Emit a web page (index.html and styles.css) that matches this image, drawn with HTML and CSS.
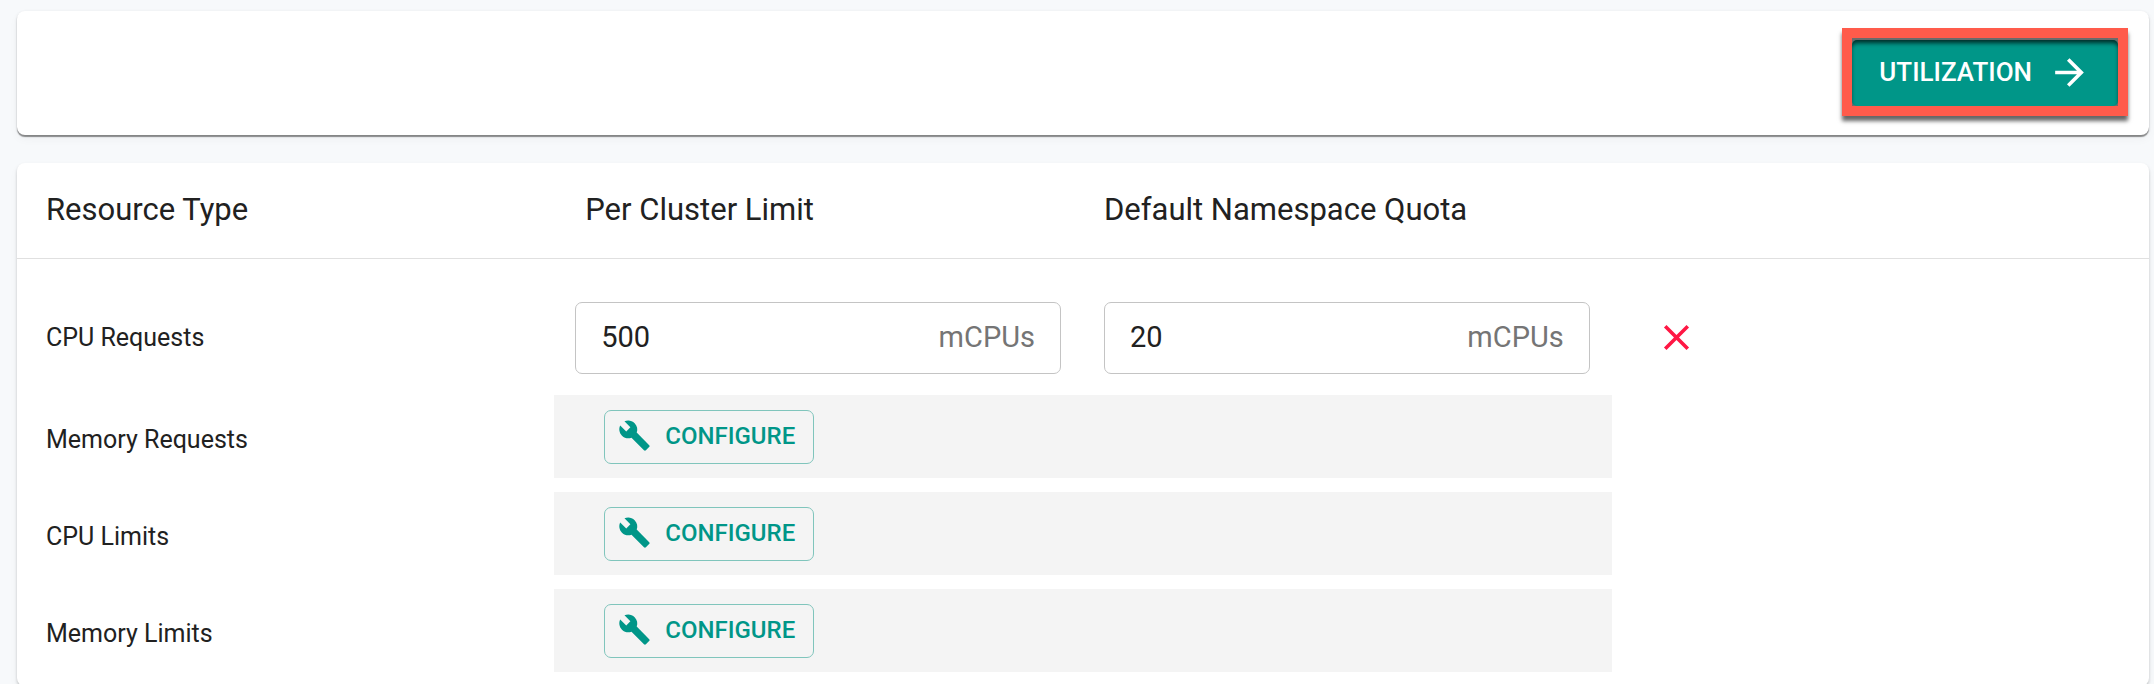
FILE: index.html
```html
<!DOCTYPE html>
<html lang="en">
    <head>
    <meta charset="utf-8">
    <title>Resource Quotas</title>
    <link rel="stylesheet" href="styles.css">
    </head>
    <body>
        <svg class="sprite">
          <symbol id="build" viewBox="0 0 24 24">
            <path d="M22.7 19l-9.1-9.1c.9-2.3.4-5-1.5-6.9-2-2-5-2.4-7.4-1.3L9 6 6 9 1.6 4.7C.4 7.1.9 10.1 2.9 12.1c1.9 1.9 4.6 2.4 6.9 1.5l9.1 9.1c.4.4 1 .4 1.4 0l2.3-2.3c.5-.4.5-1.1.1-1.4z"/>
          </symbol>
        </svg>

        <div class="card toolbar">
          <div class="highlight">
            <button class="utilization-button">
              UTILIZATION
              <svg class="arrow-icon" viewBox="0 0 24 24"><path d="M12 4l-1.41 1.41L16.17 11H4v2h12.17l-5.58 5.59L12 20l8-8z"/></svg>
            </button>
          </div>
        </div>

        <div class="card">
          <table class="quota-table">
            <thead>
              <tr>
                <th class="col-type">Resource Type</th>
                <th class="col-limit">Per Cluster Limit</th>
                <th class="col-quota">Default Namespace Quota</th>
                <th></th>
              </tr>
            </thead>
            <tbody>
              <tr class="edit-row">
                <td class="col-type">CPU Requests</td>
                <td>
                  <div class="field">
                    <input type="text" id="cpu-limit" class="field-input" value="500">
                    <label for="cpu-limit" class="unit">mCPUs</label>
                  </div>
                </td>
                <td>
                  <div class="field">
                    <input type="text" id="cpu-quota" class="field-input" value="20">
                    <label for="cpu-quota" class="unit">mCPUs</label>
                  </div>
                </td>
                <td class="col-remove">
                  <button class="remove-button" aria-label="Remove">
                    <svg class="close-icon" viewBox="0 0 24 24"><path d="M19 6.41L17.59 5 12 10.59 6.41 5 5 6.41 10.59 12 5 17.59 6.41 19 12 13.41 17.59 19 19 17.59 13.41 12z"/></svg>
                  </button>
                </td>
              </tr>
              <tr class="empty-row">
                <td class="col-type">Memory Requests</td>
                <td class="col-configure" colspan="2">
                  <div class="configure-box">
                    <button class="configure-button"><svg class="build-icon"><use href="#build"/></svg>CONFIGURE</button>
                  </div>
                </td>
                <td></td>
              </tr>
              <tr class="empty-row">
                <td class="col-type">CPU Limits</td>
                <td class="col-configure" colspan="2">
                  <div class="configure-box">
                    <button class="configure-button"><svg class="build-icon"><use href="#build"/></svg>CONFIGURE</button>
                  </div>
                </td>
                <td></td>
              </tr>
              <tr class="empty-row">
                <td class="col-type">Memory Limits</td>
                <td class="col-configure" colspan="2">
                  <div class="configure-box">
                    <button class="configure-button"><svg class="build-icon"><use href="#build"/></svg>CONFIGURE</button>
                  </div>
                </td>
                <td></td>
              </tr>
            </tbody>
          </table>
        </div>
    </body>
</html>
```
FILE: styles.css
```css
*{
  box-sizing:border-box;
}
body{
  margin:0;
  padding:11px 5px 0 17px;
  height:100vh;
  overflow:hidden;
  background-color:#f7f9fb;
  color:#212121;
  font-family:Roboto, "Liberation Sans", sans-serif;
  font-size:25px;
}
button{
  font-family:inherit;
  font-weight:500;
  cursor:pointer;
}
svg{
  fill:currentColor;
  flex-shrink:0;
}
.sprite{
  display:none;
}
.card{
  background-color:white;
  border-radius:8px;
  box-shadow:0 2px 3px rgba(0,0,0,0.2), 0 4px 10px rgba(0,0,0,0.04);
}

/* top bar */
.toolbar{
  display:flex;
  justify-content:flex-end;
  padding:17px 21px 19px;
  margin-bottom:28px;
  box-shadow:0 2px 1px rgba(0,0,0,0.4), 0 1px 3px rgba(0,0,0,0.12), 0 4px 10px rgba(0,0,0,0.04);
}
.highlight{
  border:10px solid #ff5b4b;
  padding-top:2px;
  background-color:#6b6b6b;
  box-shadow:0 5px 4px rgba(0,0,0,0.6);
}
.utilization-button{
  display:flex;
  align-items:center;
  gap:16px;
  height:66px;
  padding:0 27px 2px 27px;
  border:none;
  border-radius:5px;
  background-color:#009688;
  box-shadow:inset 0 4px 4px -1px rgba(0,0,0,0.7);
  color:white;
  font-size:26px;
}
.arrow-icon{
  width:43px;
  height:43px;
}

/* quota table */
.quota-table{
  width:100%;
  table-layout:fixed;
  border-collapse:separate;
  border-spacing:0;
}
th{
  height:96px;
  padding:0 0 3px 21px;
  border-bottom:1px solid #e0e0e0;
  font-size:31px;
  font-weight:400;
  text-align:left;
}
td{
  padding:0 22px 0 21px;
}
.quota-table .col-type{
  width:25.2%;
  padding-left:29px;
}
.quota-table .col-limit{
  width:24.8%;
  padding-left:31px;
}
.col-quota{
  width:24.8%;
}
.edit-row td{
  padding-top:43px;
  padding-bottom:21px;
}
.edit-row .col-type{
  padding-bottom:23px;
}
.field{
  display:flex;
  align-items:center;
  height:72px;
  padding:0 25px 2px;
  border:1px solid #c4c4c4;
  border-radius:7px;
  font-size:29px;
}
.field-input{
  flex:1;
  min-width:0;
  padding:0;
  border:none;
  outline:none;
  background:none;
  color:inherit;
  font:inherit;
}
.unit{
  color:#757575;
}
.quota-table .col-remove{
  padding-left:43px;
  padding-bottom:23px;
}
.remove-button{
  display:flex;
  padding:0;
  border:none;
  background:none;
  color:#ff1744;
}
.close-icon{
  width:43px;
  height:43px;
}
.empty-row td{
  padding-bottom:9px;
}
.empty-row .col-configure{
  padding:0 0 14px;
}
.configure-box{
  display:flex;
  align-items:center;
  height:83px;
  padding-left:50px;
  background-color:#f4f4f4;
}
.configure-button{
  display:flex;
  align-items:center;
  gap:14px;
  height:54px;
  padding:0 18px 2px 13px;
  border:1px solid #80c5bc;
  border-radius:7px;
  background:none;
  color:#009688;
  font-size:24px;
}
.build-icon{
  width:33px;
  height:33px;
}
```
